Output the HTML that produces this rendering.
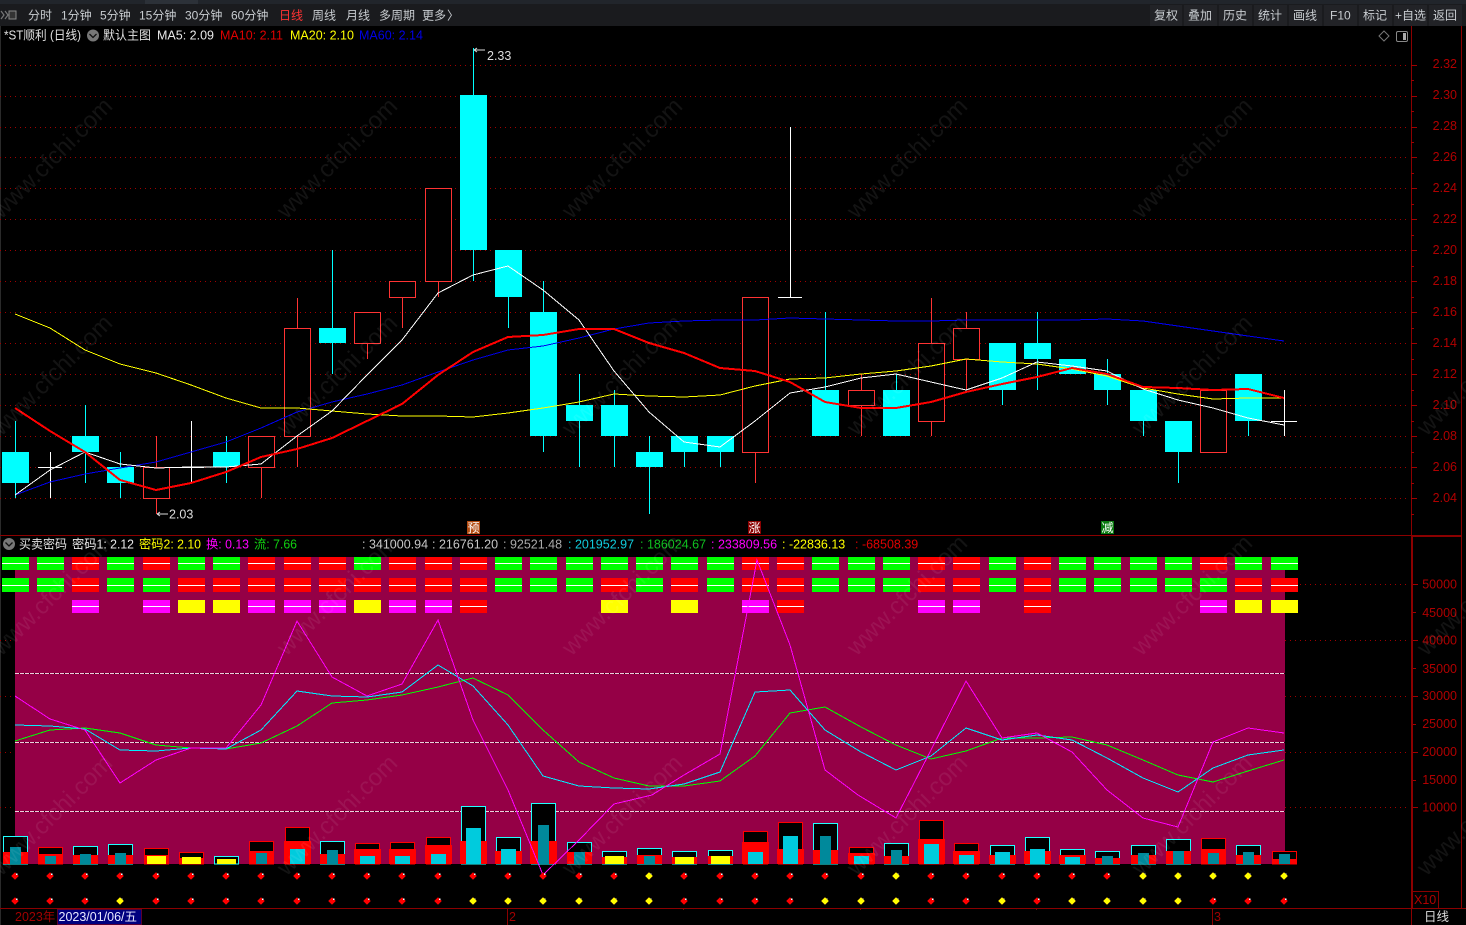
<!DOCTYPE html>
<html><head><meta charset="utf-8"><style>
html,body{margin:0;padding:0;background:#000;width:1466px;height:925px;overflow:hidden}
svg{display:block}
text{font-family:"Liberation Sans","Noto Sans CJK SC",sans-serif;font-size:12.5px}
.tb text{font-size:12px;fill:#c8ccd0}
.ax text{fill:#b00000;text-anchor:end}
.wm text{font-size:24px;fill:#fff;fill-opacity:.075;text-anchor:middle}
polyline{shape-rendering:crispEdges}
</style></head><body>
<svg width="1466" height="925" viewBox="0 0 1466 925" xmlns="http://www.w3.org/2000/svg">
<defs>
<path id="wr" fill="none" stroke="#fff" d="M2 0h27M37 0h27M72 0h27M107 0h27M143 0h27M178 0h27M213 0h27M248 0h27M284 0h27M319 0h27M354 0h27M389 0h27M425 0h27M460 0h27M495 0h27M530 0h27M566 0h27M601 0h27M636 0h27M671 0h27M707 0h27M742 0h27M777 0h27M812 0h27M848 0h27M883 0h27M918 0h27M953 0h27M989 0h27M1024 0h27M1059 0h27M1094 0h27M1130 0h27M1165 0h27M1200 0h27M1235 0h27M1271 0h27"/>
<path id="dy" fill="#ff0" stroke="#ff0" stroke-width=".7" stroke-linejoin="round" d="M0 -3.300l3.300 3.300-3.300 3.300-3.300-3.300z"/>
<g id="dr"><path fill="#f00" stroke="#f00" stroke-width=".7" stroke-linejoin="round" d="M15 -3.300l3.300 3.300-3.300 3.300-3.300-3.300zM50 -3.300l3.300 3.300-3.300 3.300-3.300-3.300zM85 -3.300l3.300 3.300-3.300 3.300-3.300-3.300zM120 -3.300l3.300 3.300-3.300 3.300-3.300-3.300zM156 -3.300l3.300 3.300-3.300 3.300-3.300-3.300zM191 -3.300l3.300 3.300-3.300 3.300-3.300-3.300zM226 -3.300l3.300 3.300-3.300 3.300-3.300-3.300zM261 -3.300l3.300 3.300-3.300 3.300-3.300-3.300zM297 -3.300l3.300 3.300-3.300 3.300-3.300-3.300zM332 -3.300l3.300 3.300-3.300 3.300-3.300-3.300zM367 -3.300l3.300 3.300-3.300 3.300-3.300-3.300zM402 -3.300l3.300 3.300-3.300 3.300-3.300-3.300zM438 -3.300l3.300 3.300-3.300 3.300-3.300-3.300zM473 -3.300l3.300 3.300-3.300 3.300-3.300-3.300zM508 -3.300l3.300 3.300-3.300 3.300-3.300-3.300zM543 -3.300l3.300 3.300-3.300 3.300-3.300-3.300zM579 -3.300l3.300 3.300-3.300 3.300-3.300-3.300zM614 -3.300l3.300 3.300-3.300 3.300-3.300-3.300zM649 -3.300l3.300 3.300-3.300 3.300-3.300-3.300zM684 -3.300l3.300 3.300-3.300 3.300-3.300-3.300zM720 -3.300l3.300 3.300-3.300 3.300-3.300-3.300zM755 -3.300l3.300 3.300-3.300 3.300-3.300-3.300zM790 -3.300l3.300 3.300-3.300 3.300-3.300-3.300zM825 -3.300l3.300 3.300-3.300 3.300-3.300-3.300zM861 -3.300l3.300 3.300-3.300 3.300-3.300-3.300zM896 -3.300l3.300 3.300-3.300 3.300-3.300-3.300zM931 -3.300l3.300 3.300-3.300 3.300-3.300-3.300zM966 -3.300l3.300 3.300-3.300 3.300-3.300-3.300zM1002 -3.300l3.300 3.300-3.300 3.300-3.300-3.300zM1037 -3.300l3.300 3.300-3.300 3.300-3.300-3.300zM1072 -3.300l3.300 3.300-3.300 3.300-3.300-3.300zM1107 -3.300l3.300 3.300-3.300 3.300-3.300-3.300zM1143 -3.300l3.300 3.300-3.300 3.300-3.300-3.300zM1178 -3.300l3.300 3.300-3.300 3.300-3.300-3.300zM1213 -3.300l3.300 3.300-3.300 3.300-3.300-3.300zM1248 -3.300l3.300 3.300-3.300 3.300-3.300-3.300zM1284 -3.300l3.300 3.300-3.300 3.300-3.300-3.300z"/>
<path fill="#fff" d="M16 -1h1.500v-1.500h-1.500zM51 -1h1.500v-1.500h-1.500zM86 -1h1.500v-1.500h-1.500zM121 -1h1.500v-1.500h-1.500zM157 -1h1.500v-1.500h-1.500zM192 -1h1.500v-1.500h-1.500zM227 -1h1.500v-1.500h-1.500zM262 -1h1.500v-1.500h-1.500zM298 -1h1.500v-1.500h-1.500zM333 -1h1.500v-1.500h-1.500zM368 -1h1.500v-1.500h-1.500zM403 -1h1.500v-1.500h-1.500zM439 -1h1.500v-1.500h-1.500zM474 -1h1.500v-1.500h-1.500zM509 -1h1.500v-1.500h-1.500zM544 -1h1.500v-1.500h-1.500zM580 -1h1.500v-1.500h-1.500zM615 -1h1.500v-1.500h-1.500zM650 -1h1.500v-1.500h-1.500zM685 -1h1.500v-1.500h-1.500zM721 -1h1.500v-1.500h-1.500zM756 -1h1.500v-1.500h-1.500zM791 -1h1.500v-1.500h-1.500zM826 -1h1.500v-1.500h-1.500zM862 -1h1.500v-1.500h-1.500zM897 -1h1.500v-1.500h-1.500zM932 -1h1.500v-1.500h-1.500zM967 -1h1.500v-1.500h-1.500zM1003 -1h1.500v-1.500h-1.500zM1038 -1h1.500v-1.500h-1.500zM1073 -1h1.500v-1.500h-1.500zM1108 -1h1.500v-1.500h-1.500zM1144 -1h1.500v-1.500h-1.500zM1179 -1h1.500v-1.500h-1.500zM1214 -1h1.500v-1.500h-1.500zM1249 -1h1.500v-1.500h-1.500zM1285 -1h1.500v-1.500h-1.500z"/></g>
</defs>
<rect width="1466" height="925" fill="#000"/>
<rect x="0" y="0" width="1" height="925" fill="#2a2a2a"/>
<!-- toolbar -->
<rect width="1466" height="4" fill="#21252b"/><rect x="145" width="53" height="4" fill="#2c3138"/>
<rect y="4" width="1466" height="22" fill="#1a1b1e"/>
<path d="M1150 5h32v21h-32zM1184 5h33v21h-33zM1219 5h33v21h-33zM1254 5h33v21h-33zM1289 5h33v21h-33zM1324 5h33v21h-33zM1359 5h33v21h-33zM1394 5h33v21h-33zM1429 5h33v21h-33z" fill="#222327"/>
<path d="M1 11l3 4-3 4M5 11l3 4-3 4" fill="none" stroke="#777" stroke-width="1.200"/>
<rect x="9" y="11" width="7" height="8" fill="#333" stroke="#888"/>
<g class="tb">
<text x="28" y="19.500">分时</text><text x="61" y="19.500">1分钟</text><text x="100" y="19.500">5分钟</text><text x="139" y="19.500">15分钟</text><text x="185" y="19.500">30分钟</text><text x="231" y="19.500">60分钟</text><text x="279" y="19.500" style="fill:#f33">日线</text><text x="312" y="19.500">周线</text><text x="346" y="19.500">月线</text><text x="379" y="19.500">多周期</text><text x="422" y="19.500">更多</text><text x="447" y="19.500">〉</text>
<text x="1154" y="19.500">复权</text><text x="1188" y="19.500">叠加</text><text x="1223" y="19.500">历史</text><text x="1258" y="19.500">统计</text><text x="1293" y="19.500">画线</text><text x="1330" y="19.500">F10</text><text x="1363" y="19.500">标记</text><text x="1395" y="19.500">+自选</text><text x="1433" y="19.500">返回</text>
</g>
<!-- main grid -->
<path stroke="#a00000" stroke-dasharray="1 4" fill="none" d="M0 65.500H1406M0 96.500H1406M0 127.500H1406M0 157.500H1406M0 188.500H1406M0 219.500H1406M0 250.500H1406M0 281.500H1406M0 312.500H1406M0 343.500H1406M0 374.500H1406M0 405.500H1406M0 436.500H1406M0 467.500H1406M0 498.500H1406"/>
<!-- candle wicks -->
<path stroke="#0ff" fill="none" d="M15.500 421V452M15.500 483V498M85.500 405V483M120.500 452V498M226.500 436V483M332.500 250V374M473.500 48V281M508.500 250V328M543.500 281V452M579.500 374V467M614.500 390V467M649.500 436V514M684.500 436V467M720.500 436V467M825.500 312V436M896.500 374V436M1002.500 343V405M1037.500 312V390M1072.500 359V374M1107.500 359V405M1143.500 390V436M1178.500 421V483M1248.500 374V436"/>
<path stroke="#f33" fill="none" d="M156.500 436V514M261.500 436V498M297.500 298V467M367.500 312V359M402.500 281V328M438.500 188V297M755.500 297V483M861.500 374V436M931.500 298V436M966.500 312V390"/>
<path stroke="#fff" fill="none" d="M50.500 452V498M38 467.500H62M191.500 421V483M179 467.500H204M790.500 127V297M778 297.500H802M1284.500 390V436M1271 421.500H1297"/>
<!-- cyan bodies -->
<path fill="#0ff" d="M2 452h27v31H2zM72 436h27v16H72zM107 467h27v16H107zM213 452h27v15H213zM319 328h27v15H319zM460 95h27v155H460zM495 250h27v47H495zM530 312h27v124H530zM566 405h27v16H566zM601 405h27v31H601zM636 452h27v15H636zM671 436h27v16H671zM707 436h27v16H707zM812 390h27v46H812zM883 390h27v46H883zM989 343h27v47H989zM1024 343h27v16H1024zM1059 359h27v15H1059zM1094 374h27v16H1094zM1130 390h27v31H1130zM1165 421h27v31H1165zM1235 374h27v47H1235z"/>
<!-- red bodies -->
<path fill="#000" stroke="#f33" d="M143.500 467.500h26v31h-26zM248.500 436.500h26v31h-26zM284.500 328.500h26v108h-26zM354.500 312.500h26v31h-26zM389.500 281.500h26v16h-26zM425.500 188.500h26v93h-26zM742.500 297.500h26v155h-26zM848.500 390.500h26v15h-26zM918.500 343.500h26v78h-26zM953.500 328.500h26v31h-26zM1200.500 390.500h26v62h-26z"/>
<!-- MA lines -->
<g fill="none" stroke-linejoin="round">
<polyline stroke="#0000f0" points="15,495 50,482 85,474 120,468 156,462 191,452 226,442 261,428 297,412 332,402 367,394 402,385 438,372 473,360 508,350 543,346 579,338 614,329 649,323 684,321 720,320 755,320 790,318 825,319 861,320 896,321 931,321 966,320 1002,320 1037,320 1072,320 1107,319 1143,321 1178,326 1213,331 1248,336 1284,341"/>
<polyline stroke="#ff0" points="15,314 50,328 85,350 120,364 156,373 191,385 226,398 261,408 297,408 332,411 367,414 402,416 438,416 473,417 508,413 543,408 579,402 614,394 649,396 684,397 720,395 755,386 790,379 825,378 861,374 896,371 931,366 966,359 1002,362 1037,364 1072,369 1107,376 1143,388 1178,394 1213,399 1248,398 1284,398"/>
<polyline stroke="#fff" points="15,495 50,470 85,452 120,464 156,468 191,467 226,467 261,464 297,436 332,411 367,375 402,340 438,293 473,275 508,266 543,290 579,320 614,371 649,412 684,442 720,447 755,421 790,393 825,387 861,378 896,374 931,382 966,390 1002,378 1037,362 1072,366 1107,371 1143,389 1178,400 1213,408 1248,418 1284,425"/>
<polyline stroke="#f00" stroke-width="2" points="15,408 50,431 85,452 120,480 156,490 191,483 226,472 261,457 297,449 332,438 367,421 402,404 438,375 473,352 508,337 543,335 579,329 614,329 649,343 684,353 720,368 755,371 790,382 825,402 861,408 896,408 931,402 966,392 1002,384 1037,377 1072,368 1107,374 1143,387 1178,388 1213,390 1248,389 1284,398"/>
</g>
<!-- info line -->
<text x="4" y="39.500" fill="#e0e0e0" textLength="77" lengthAdjust="spacingAndGlyphs">*ST顺利 (日线)</text>
<circle cx="93" cy="35.500" r="6" fill="#777"/><path d="M89.500 34l3.500 3.500 3.500-3.500" fill="none" stroke="#111" stroke-width="1.300"/>
<text x="103" y="39.500" fill="#e0e0e0" textLength="48" lengthAdjust="spacingAndGlyphs">默认主图</text>
<text x="157" y="39.500" fill="#e8e8e8">MA5: 2.09</text>
<text x="220" y="39.500" fill="#e00000">MA10: 2.11</text>
<text x="290" y="39.500" fill="#ff0">MA20: 2.10</text>
<text x="359" y="39.500" fill="#0000e6">MA60: 2.14</text>
<path d="M1384 31l5 5-5 5-5-5z" fill="none" stroke="#777"/>
<rect x="1396.500" y="31.500" width="11" height="10" rx="1.500" fill="none" stroke="#888"/><rect x="1403" y="33" width="3" height="7" fill="#aaa"/>
<!-- high / low labels -->
<path d="M474 50H485M474 50l3-2M474 50l3 2M157 514H168M157 514l3-2M157 514l3 2" stroke="#ddd" fill="none"/>
<text x="487" y="60" fill="#ddd">2.33</text><text x="169" y="518.500" fill="#ddd">2.03</text>
<!-- marks -->
<rect x="467" y="521" width="13" height="13" fill="#b24a10"/><text x="473.500" y="532" fill="#fff" text-anchor="middle" style="font-size:12px">预</text>
<rect x="748" y="521" width="13" height="13" fill="#8b0000"/><text x="754.500" y="532" fill="#fff" text-anchor="middle" style="font-size:12px">涨</text>
<rect x="1101" y="521" width="13" height="13" fill="#0a7a10"/><text x="1107.500" y="532" fill="#fff" text-anchor="middle" style="font-size:12px">减</text>
<!-- sub panel -->
<path stroke="#a00000" stroke-dasharray="1 4" fill="none" d="M0 584.500H1406M0 640.500H1406M0 696.500H1406M0 752.500H1406M0 807.500H1406"/>
<rect x="15" y="557" width="1270" height="307" fill="#950046"/>
<path stroke="#200010" fill="none" d="M15 673.500H1285M15 742.500H1285M15 811.500H1285"/>
<path stroke="#eccfdc" stroke-dasharray="4 1" fill="none" d="M15 673.500H1285M15 742.500H1285M15 811.500H1285"/>
<g fill="none">
<polyline stroke="#0f0" points="15,741 50,730 85,728 120,733 156,745 191,748 226,749 261,743 297,726 332,703 367,700 402,695 438,687 473,678 508,695 543,730 579,762 614,778 649,786 684,786 720,781 755,756 790,713 825,707 861,727 896,745 931,759 966,751 1002,738 1037,738 1072,737 1107,745 1143,760 1178,775 1213,782 1248,771 1284,760"/>
<polyline stroke="#0ef" points="15,725 50,726 85,729 120,750 156,751 191,748 226,749 261,730 297,691 332,696 367,697 402,692 438,665 473,686 508,725 543,776 579,786 614,788 649,789 684,784 720,772 755,692 790,690 825,730 861,752 896,770 931,756 966,728 1002,740 1037,735 1072,740 1107,758 1143,778 1178,792 1213,768 1248,755 1284,750"/>
</g>
<!-- signal rows -->
<path fill="none" stroke="#0f0" stroke-width="13" d="M2 563.500h27M37 563.500h27M107 563.500h27M178 563.500h27M213 563.500h27M354 563.500h27M495 563.500h27M530 563.500h27M566 563.500h27M601 563.500h27M636 563.500h27M671 563.500h27M707 563.500h27M812 563.500h27M848 563.500h27M883 563.500h27M989 563.500h27M1059 563.500h27M1094 563.500h27M1130 563.500h27M1165 563.500h27M1235 563.500h27M1271 563.500h27"/>
<path fill="none" stroke="#f00" stroke-width="13" d="M72 563.500h27M143 563.500h27M248 563.500h27M284 563.500h27M319 563.500h27M389 563.500h27M425 563.500h27M460 563.500h27M742 563.500h27M777 563.500h27M918 563.500h27M953 563.500h27M1024 563.500h27M1200 563.500h27"/>
<path fill="none" stroke="#0f0" stroke-width="14" d="M2 585h27M37 585h27M107 585h27M143 585h27M495 585h27M530 585h27M566 585h27M636 585h27M707 585h27M812 585h27M848 585h27M883 585h27M989 585h27M1059 585h27M1094 585h27M1130 585h27M1165 585h27M1200 585h27"/>
<path fill="none" stroke="#f00" stroke-width="14" d="M72 585h27M178 585h27M213 585h27M248 585h27M284 585h27M319 585h27M354 585h27M389 585h27M425 585h27M460 585h27M601 585h27M671 585h27M742 585h27M777 585h27M918 585h27M953 585h27M1024 585h27M1235 585h27M1271 585h27"/>
<path fill="none" stroke="#f0f" stroke-width="13" d="M72 606.500h27M143 606.500h27M248 606.500h27M284 606.500h27M319 606.500h27M389 606.500h27M425 606.500h27M742 606.500h27M918 606.500h27M953 606.500h27M1200 606.500h27"/>
<path fill="none" stroke="#ff0" stroke-width="13" d="M178 606.500h27M213 606.500h27M354 606.500h27M601 606.500h27M671 606.500h27M1235 606.500h27M1271 606.500h27"/>
<path fill="none" stroke="#f00" stroke-width="13" d="M460 606.500h27M777 606.500h27M1024 606.500h27"/>
<use href="#wr" y="563.500"/><use href="#wr" y="585.500"/>
<path fill="none" stroke="#fff" d="M72 606.500h27M143 606.500h27M248 606.500h27M284 606.500h27M319 606.500h27M389 606.500h27M425 606.500h27M460 606.500h27M742 606.500h27M777 606.500h27M918 606.500h27M953 606.500h27M1024 606.500h27M1200 606.500h27"/>
<!-- volume boxes -->
<g fill="#000" stroke="#2ff">
<rect x="3.500" y="836.500" width="24" height="27.500"/><rect x="73.500" y="846.500" width="24" height="17.500"/><rect x="108.500" y="844.500" width="24" height="19.500"/><rect x="214.500" y="856.500" width="24" height="7.500"/><rect x="320.500" y="841.500" width="24" height="22.500"/><rect x="461.500" y="806.500" width="24" height="57.500"/><rect x="496.500" y="837.500" width="24" height="26.500"/><rect x="531.500" y="803.500" width="24" height="60.500"/><rect x="567.500" y="842.500" width="24" height="21.500"/><rect x="602.500" y="851.500" width="24" height="12.500"/><rect x="637.500" y="848.500" width="24" height="15.500"/><rect x="672.500" y="851.500" width="24" height="12.500"/><rect x="708.500" y="850.500" width="24" height="13.500"/><rect x="813.500" y="823.500" width="24" height="40.500"/><rect x="884.500" y="843.500" width="24" height="20.500"/><rect x="990.500" y="845.500" width="24" height="18.500"/><rect x="1025.500" y="837.500" width="24" height="26.500"/><rect x="1060.500" y="849.500" width="24" height="14.500"/><rect x="1095.500" y="851.500" width="24" height="12.500"/><rect x="1131.500" y="845.500" width="24" height="18.500"/><rect x="1166.500" y="839.500" width="24" height="24.500"/><rect x="1236.500" y="845.500" width="24" height="18.500"/>
</g>
<g fill="#000" stroke="#f00">
<rect x="38.500" y="847.500" width="24" height="16.500"/><rect x="144.500" y="848.500" width="24" height="15.500"/><rect x="179.500" y="852.500" width="24" height="11.500"/><rect x="249.500" y="841.500" width="24" height="22.500"/><rect x="285.500" y="827.500" width="24" height="36.500"/><rect x="355.500" y="843.500" width="24" height="20.500"/><rect x="390.500" y="842.500" width="24" height="21.500"/><rect x="426.500" y="837.500" width="24" height="26.500"/><rect x="743.500" y="831.500" width="24" height="32.500"/><rect x="778.500" y="822.500" width="24" height="41.500"/><rect x="849.500" y="847.500" width="24" height="16.500"/><rect x="919.500" y="820.500" width="24" height="43.500"/><rect x="954.500" y="843.500" width="24" height="20.500"/><rect x="1201.500" y="838.500" width="24" height="25.500"/><rect x="1272.500" y="851.500" width="24" height="12.500"/>
</g>
<!-- volume red -->
<path fill="#f00" d="M3 852h25V864H3zM38 854h25V864H38zM73 855h25V864H73zM108 855h25V864H108zM144 855h25V864H144zM179 858h25V864H179zM249 851h25V864H249zM284 841h27V864H284zM320 854h25V864H320zM354 849h27V864H354zM389 849h27V864H389zM425 845h27V864H425zM460 841h27V864H460zM495 851h27V864H495zM530 841h27V864H530zM567 852h25V864H567zM602 857h25V864H602zM637 855h25V864H637zM672 857h25V864H672zM708 856h25V864H708zM742 842h27V864H742zM777 849h27V864H777zM813 850h25V864H813zM848 853h27V864H848zM884 856h25V864H884zM918 839h27V864H918zM953 851h27V864H953zM989 855h27V864H989zM1024 851h27V864H1024zM1059 855h27V864H1059zM1095 858h25V864H1095zM1131 855h25V864H1131zM1166 851h25V864H1166zM1201 849h25V864H1201zM1236 855h25V864H1236zM1272 859h25V864H1272z"/>
<!-- inner bars -->
<path fill="#00899b" d="M10 847h11V864H10zM45 856h11V864H45zM80 854h11V864H80zM115 853h11V864H115zM256 853h11V864H256zM327 850h11V864H327zM538 825h11V864H538zM574 852h11V864H574zM644 856h11V864H644zM820 836h11V864H820zM891 850h11V864H891zM1102 856h11V864H1102zM1138 853h11V864H1138zM1173 851h11V864H1173zM1208 853h11V864H1208zM1243 852h11V864H1243zM1279 854h11V864H1279z"/>
<path fill="#00cbdd" d="M290 849h15V864H290zM360 856h15V864H360zM395 856h15V864H395zM431 854h15V864H431zM466 828h15V864H466zM501 849h15V864H501zM748 852h15V864H748zM783 836h15V864H783zM854 856h15V864H854zM924 844h15V864H924zM959 855h15V864H959zM995 852h15V864H995zM1030 849h15V864H1030zM1065 857h15V864H1065z"/>
<path fill="#ff0" d="M147 856h19V864H147zM182 857h19V864H182zM217 859h19V864H217zM605 856h19V864H605zM675 857h19V864H675zM711 856h19V864H711z"/>
<!-- magenta line over -->
<polyline fill="none" stroke="#f0f" points="15,696 50,719 85,730 120,783 156,760 191,748 226,748 261,705 297,621 332,677 367,696 402,684 438,620 473,720 508,790 543,875 579,840 614,804 652,795 684,775 720,754 757,560 790,645 825,770 858,795 896,818 931,750 966,681 1002,738 1037,733 1072,752 1107,790 1143,818 1178,827 1213,742 1248,728 1284,733"/>
<!-- dots -->
<use href="#dr" y="876"/><use href="#dr" y="901"/>
<use href="#dy" x="649" y="876"/><use href="#dy" x="896" y="876"/><use href="#dy" x="1143" y="876"/><use href="#dy" x="1178" y="876"/><use href="#dy" x="1213" y="876"/><use href="#dy" x="1248" y="876"/><use href="#dy" x="1284" y="876"/>
<use href="#dy" x="120" y="901"/><use href="#dy" x="473" y="901"/><use href="#dy" x="508" y="901"/><use href="#dy" x="543" y="901"/><use href="#dy" x="579" y="901"/><use href="#dy" x="614" y="901"/><use href="#dy" x="649" y="901"/><use href="#dy" x="825" y="901"/><use href="#dy" x="861" y="901"/><use href="#dy" x="896" y="901"/><use href="#dy" x="1002" y="901"/><use href="#dy" x="1072" y="901"/><use href="#dy" x="1107" y="901"/><use href="#dy" x="1143" y="901"/><use href="#dy" x="1178" y="901"/>
<!-- sub info -->
<circle cx="9" cy="544" r="6" fill="#777"/><path d="M5.500 542.500l3.500 3.500 3.500-3.500" fill="none" stroke="#111" stroke-width="1.300"/>
<text x="19" y="548.500" fill="#e0e0e0" textLength="48" lengthAdjust="spacingAndGlyphs">买卖密码</text>
<text x="72" y="548.500" fill="#e8e8e8" textLength="62" lengthAdjust="spacingAndGlyphs">密码1: 2.12</text>
<text x="139" y="548.500" fill="#ff0" textLength="62" lengthAdjust="spacingAndGlyphs">密码2: 2.10</text>
<text x="206" y="548.500" fill="#f0f" textLength="43" lengthAdjust="spacingAndGlyphs">换: 0.13</text>
<text x="254" y="548.500" fill="#10d010" textLength="43" lengthAdjust="spacingAndGlyphs">流: 7.66</text>
<text x="362" y="548.500" fill="#c8c8c8">: 341000.94</text>
<text x="432" y="548.500" fill="#c8c8c8">: 216761.20</text>
<text x="503" y="548.500" fill="#aaa">: 92521.48</text>
<text x="568" y="548.500" fill="#1cd">: 201952.97</text>
<text x="640" y="548.500" fill="#10c020">: 186024.67</text>
<text x="711" y="548.500" fill="#f0f">: 233809.56</text>
<text x="782" y="548.500" fill="#ff0">: -22836.13</text>
<text x="855" y="548.500" fill="#e00000">: -68508.39</text>
<!-- axes -->
<path fill="none" stroke="#8b0000" d="M0 535.500H1411M0 908.500H1466M1411.500 26V925M1461.500 26V908M507.500 908V925M1212.500 908V925M683.500 908v2M860.500 908v2M1036.500 908v2"/>
<rect x="1411" y="535" width="51" height="2" fill="#8b0000"/><rect x="1411" y="536" width="2" height="372" fill="#8b0000"/>
<rect x="1412.500" y="891.500" width="26" height="17" fill="none" stroke="#8b0000"/>
<path fill="none" stroke="#a00000" d="M1411 65.500h6M1411 96.500h6M1411 127.500h6M1411 157.500h6M1411 188.500h6M1411 219.500h6M1411 250.500h6M1411 281.500h6M1411 312.500h6M1411 343.500h6M1411 374.500h6M1411 405.500h6M1411 436.500h6M1411 467.500h6M1411 498.500h6M1411 80.500h3M1411 111.500h3M1411 142.500h3M1411 173.500h3M1411 204.500h3M1411 235.500h3M1411 266.500h3M1411 297.500h3M1411 328.500h3M1411 359.500h3M1411 390.500h3M1411 421.500h3M1411 452.500h3M1411 483.500h3M1411 514.500h3M1413 584.500h5M1413 640.500h5M1413 696.500h5M1413 752.500h5M1413 807.500h5M1413 612.500h3M1413 668.500h3M1413 724.500h3M1413 780.500h3"/>
<g class="ax">
<text x="1457" y="68">2.32</text><text x="1457" y="99">2.30</text><text x="1457" y="130">2.28</text><text x="1457" y="161">2.26</text><text x="1457" y="192">2.24</text><text x="1457" y="223">2.22</text><text x="1457" y="254">2.20</text><text x="1457" y="285">2.18</text><text x="1457" y="316">2.16</text><text x="1457" y="347">2.14</text><text x="1457" y="378">2.12</text><text x="1457" y="409">2.10</text><text x="1457" y="440">2.08</text><text x="1457" y="471">2.06</text><text x="1457" y="502">2.04</text>
<text x="1457" y="588.500">50000</text><text x="1457" y="617">45000</text><text x="1457" y="644.500">40000</text><text x="1457" y="673">35000</text><text x="1457" y="700">30000</text><text x="1457" y="728">25000</text><text x="1457" y="756">20000</text><text x="1457" y="784">15000</text><text x="1457" y="811.500">10000</text>
</g>
<text x="1414" y="904" fill="#b00000">X10</text>
<!-- date axis -->
<text x="15" y="921" fill="#a00000">2023年</text>
<rect x="57.500" y="909.500" width="84" height="15" fill="#00007f" stroke="#5a0030"/>
<text x="58.500" y="921" fill="#e8e8ff">2023/01/06/五</text>
<text x="509" y="921" fill="#a00000">2</text><text x="1214" y="921" fill="#a00000">3</text>
<text x="1424" y="921" fill="#ddd">日线</text>
<!-- watermark -->
<g class="wm">
<text transform="rotate(-45 52 158)" x="52" y="166">www.cfchi.com</text><text transform="rotate(-45 337 158)" x="337" y="166">www.cfchi.com</text><text transform="rotate(-45 622 158)" x="622" y="166">www.cfchi.com</text><text transform="rotate(-45 907 158)" x="907" y="166">www.cfchi.com</text><text transform="rotate(-45 1192 158)" x="1192" y="166">www.cfchi.com</text>
<text transform="rotate(-45 52 375)" x="52" y="383">www.cfchi.com</text><text transform="rotate(-45 337 375)" x="337" y="383">www.cfchi.com</text><text transform="rotate(-45 622 375)" x="622" y="383">www.cfchi.com</text><text transform="rotate(-45 907 375)" x="907" y="383">www.cfchi.com</text><text transform="rotate(-45 1192 375)" x="1192" y="383">www.cfchi.com</text><text transform="rotate(-45 1477 375)" x="1477" y="383">www.cfchi.com</text>
<text transform="rotate(-45 52 595)" x="52" y="603">www.cfchi.com</text><text transform="rotate(-45 337 595)" x="337" y="603">www.cfchi.com</text><text transform="rotate(-45 622 595)" x="622" y="603">www.cfchi.com</text><text transform="rotate(-45 907 595)" x="907" y="603">www.cfchi.com</text><text transform="rotate(-45 1192 595)" x="1192" y="603">www.cfchi.com</text><text transform="rotate(-45 1477 595)" x="1477" y="603">www.cfchi.com</text>
<text transform="rotate(-45 52 815)" x="52" y="823">www.cfchi.com</text><text transform="rotate(-45 337 815)" x="337" y="823">www.cfchi.com</text><text transform="rotate(-45 622 815)" x="622" y="823">www.cfchi.com</text><text transform="rotate(-45 907 815)" x="907" y="823">www.cfchi.com</text><text transform="rotate(-45 1192 815)" x="1192" y="823">www.cfchi.com</text><text transform="rotate(-45 1477 815)" x="1477" y="823">www.cfchi.com</text>
</g>
</svg>
</body></html>
